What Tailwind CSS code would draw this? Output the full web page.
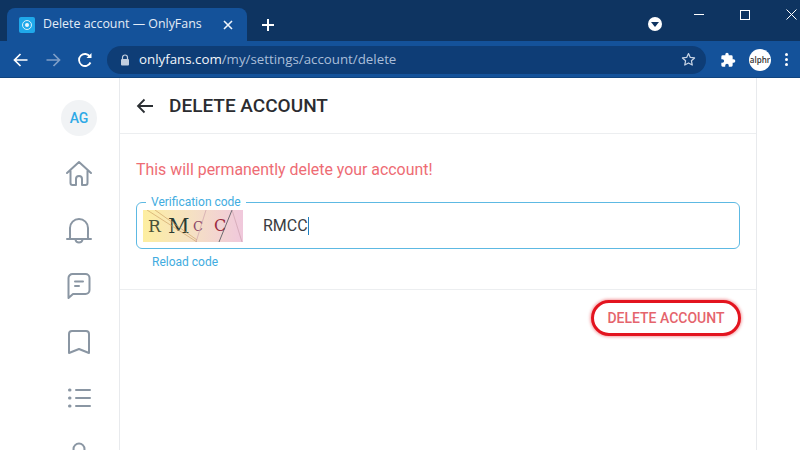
<!DOCTYPE html>
<html lang="en">
  <head>
    <meta charset="UTF-8" />
    <title>Delete account — OnlyFans</title>
    <script src="https://cdn.jsdelivr.net/npm/@tailwindcss/browser@4"></script>
  </head>
  <body class="w-[800px] h-[450px] overflow-hidden bg-white font-['Roboto',sans-serif] flex flex-col">
    <!-- tab strip -->
    <div class="h-[41px] shrink-0 bg-[#0e3461] flex items-end pl-[7px] relative">
      <div class="w-[240px] h-[33px] bg-[#14529a] rounded-t-[8px] flex items-center pl-[12px] pr-[12px] font-['Open_Sans',sans-serif] text-[12.4px] text-[#e4edf7]">
        <div class="w-[16px] h-[16px] rounded-[2px] bg-[#1fa8ea] flex items-center justify-center mr-[8px]">
          <div class="w-[10px] h-[10px] rounded-full border border-white/80 flex items-center justify-center">
            <div class="w-[4px] h-[4px] rounded-full bg-white/90"></div>
          </div>
        </div>
        <span class="flex-1 whitespace-nowrap">Delete account — OnlyFans</span>
        <svg class="w-[10px] h-[10px] mr-[2px]" viewBox="0 0 10 10" stroke="#f0f5fb" stroke-width="1.6"><path d="M1 1l8 8M9 1l-8 8" /></svg>
      </div>
      <svg class="w-[12px] h-[12px] ml-[15px] mb-[10px]" viewBox="0 0 12 12" stroke="#fff" stroke-width="2"><path d="M6 0v12M0 6h12" /></svg>
      <!-- profile dropdown + window controls -->
      <div class="absolute left-[648px] top-[17px] w-[14px] h-[14px] rounded-full bg-white flex items-center justify-center">
        <div class="w-0 h-0 border-l-[4px] border-r-[4px] border-t-[5px] border-l-transparent border-r-transparent border-t-[#0e3461]"></div>
      </div>
      <div class="absolute right-[3px] top-[9px] flex items-center gap-[36px]">
        <div class="w-[10px] h-px bg-white"></div>
        <div class="w-[10px] h-[10px] border border-white"></div>
        <svg class="w-[11px] h-[11px]" viewBox="0 0 11 11" stroke="#fff" stroke-width="1"><path d="M.5.5l10 10M10.500.5l-10 10" /></svg>
      </div>
    </div>
    <!-- toolbar -->
    <div class="h-[37px] shrink-0 bg-[#14529a] flex items-center pl-[13px] pr-[10px] pt-[1px] border-b border-[#10447f]">
      <svg class="w-[15px] h-[14px]" viewBox="0 0 15 14" fill="none" stroke="#fff" stroke-width="1.7"><path d="M14.500 7H1.500M7.500 1L1.500 7l6 6" /></svg>
      <svg class="w-[15px] h-[14px] ml-[18px]" viewBox="0 0 15 14" fill="none" stroke="#7f9fc8" stroke-width="1.7"><path d="M.5 7h13M7.500 1l6 6-6 6" /></svg>
      <svg class="w-[16px] h-[16px] ml-[16px]" viewBox="0 0 16 16" fill="none" stroke="#fff" stroke-width="1.8"><path d="M13.500 10.500A6 6 0 1 1 13 4.600" /><path d="M14.500 1v5h-5z" fill="#fff" stroke="none" /></svg>
      <div class="w-[599px] h-[28px] ml-[14px] rounded-full bg-[#0e3d76] flex items-center pl-[13px] pr-[10px] font-['Open_Sans',sans-serif] text-[13.3px]">
        <svg class="w-[10px] h-[12px]" viewBox="0 0 10 12"><path d="M2.500 5V3.500a2.500 2.500 0 0 1 5 0V5" fill="none" stroke="#c3cfdf" stroke-width="1.2" /><rect x="1" y="5" width="8" height="6.500" rx="1" fill="#c3cfdf" /></svg>
        <span class="ml-[9px] pt-[1px] flex-1 whitespace-nowrap text-[#f2f6fb]">onlyfans.com<span class="text-[#a9bed9]">/my/settings/account/delete</span></span>
        <svg class="w-[15px] h-[15px]" viewBox="0 0 24 24" fill="none" stroke="#c7d4e5" stroke-width="2" stroke-linejoin="round"><path d="M12 2.500l2.900 6.200 6.800.8-5 4.600 1.300 6.700L12 17.500l-6 3.300 1.300-6.700-5-4.600 6.800-.8z" /></svg>
      </div>
      <svg class="w-[16px] h-[16px] ml-[14px]" viewBox="0 0 24 24" fill="#fff"><path d="M20.500 11H19V7a2 2 0 0 0-2-2h-4V3.500a2.500 2.500 0 0 0-5 0V5H4a2 2 0 0 0-2 2v3.800h1.500a2.700 2.700 0 0 1 0 5.400H2V20a2 2 0 0 0 2 2h3.800v-1.500a2.700 2.700 0 0 1 5.400 0V22H17a2 2 0 0 0 2-2v-4h1.500a2.500 2.500 0 0 0 0-5z" /></svg>
      <div class="w-[22px] h-[22px] ml-[13px] rounded-full bg-white flex items-center justify-center font-['Open_Sans',sans-serif] text-[8px] font-semibold text-[#333] overflow-hidden">alphr</div>
      <div class="ml-[14px] flex flex-col gap-[2px]">
        <div class="w-[3px] h-[3px] rounded-full bg-white"></div>
        <div class="w-[3px] h-[3px] rounded-full bg-white"></div>
        <div class="w-[3px] h-[3px] rounded-full bg-white"></div>
      </div>
    </div>
    <!-- page -->
    <div class="flex-1 flex min-h-0 w-[757px] border-r border-[#e8eaed]">
      <!-- sidebar -->
      <div class="w-[120px] shrink-0 border-r border-[#e8eaed] flex flex-col items-center pl-[39px] pt-[22px] overflow-hidden">
        <div class="w-[36px] h-[36px] shrink-0 rounded-full bg-[#f1f3f5] flex items-center justify-center text-[14px] font-medium text-[#2fa9e6]">AG</div>
        <div class="flex flex-col gap-[28px] mt-[24px] text-[#8a96a3]">
          <svg class="w-[28px] h-[28px] shrink-0" viewBox="0 0 28 28" fill="none" stroke="currentColor" stroke-width="2" stroke-linejoin="round" stroke-linecap="round"><path d="M2 13L14 2l12 11M5.500 11v12a2 2 0 0 0 2 2H11v-6a3 3 0 0 1 6 0v6h3.500a2 2 0 0 0 2-2V11" /></svg>
          <svg class="w-[28px] h-[28px] shrink-0" viewBox="0 0 28 28" fill="none" stroke="currentColor" stroke-width="2" stroke-linejoin="round" stroke-linecap="round"><path d="M2 23h24M4.500 23c1-1.500 .5-3 .5-5v-6a9 9 0 0 1 18 0v6c0 2-.5 3.500.5 5M10.500 23.500a3.500 3 0 0 0 7 0" /></svg>
          <svg class="w-[28px] h-[28px] shrink-0" viewBox="0 0 28 28" fill="none" stroke="currentColor" stroke-width="2" stroke-linejoin="round" stroke-linecap="round"><path d="M3.500 26V6a4 4 0 0 1 4-4h13a4 4 0 0 1 4 4v12a4 4 0 0 1-4 4H8z" /><path d="M10 9.500h8M10 14h4" /></svg>
          <svg class="w-[28px] h-[28px] shrink-0" viewBox="0 0 28 28" fill="none" stroke="currentColor" stroke-width="2" stroke-linejoin="round" stroke-linecap="round"><path d="M4 25V6a3 3 0 0 1 3-3h14a3 3 0 0 1 3 3v19l-10-4z" /></svg>
          <svg class="w-[28px] h-[28px] shrink-0" viewBox="0 0 28 28" fill="none" stroke="currentColor" stroke-width="2" stroke-linecap="round"><path d="M11 6h14M11 14h14M11 22h14" /><path d="M4.500 6h.5M4.500 14h.5M4.500 22h.5" stroke-width="3" /></svg>
          <svg class="w-[28px] h-[28px] shrink-0" viewBox="0 0 28 28" fill="none" stroke="currentColor" stroke-width="2"><circle cx="14" cy="9" r="5.500" /><path d="M4 25c1-6 5-8 10-8s9 2 10 8" /></svg>
        </div>
      </div>
      <!-- main column -->
      <div class="flex-1 min-w-0">
        <div class="h-[56px] border-b border-[#eceef0] flex items-center pl-[16px]">
          <svg class="w-[17px] h-[16px]" viewBox="0 0 17 16" fill="none" stroke="#2b2f33" stroke-width="1.800"><path d="M17 8H2M8.500 1.500L2 8l6.500 6.500" /></svg>
          <h1 class="ml-[16px] mt-[2px] text-[19px] font-medium text-[#2b2c30] whitespace-nowrap">DELETE ACCOUNT</h1>
        </div>
        <div class="h-[156px] border-b border-[#eceef0] pt-[25px] px-[16px]">
          <p class="text-[15.9px] leading-[22px] text-[#ee6c74]">This will permanently delete your account!</p>
          <fieldset class="mt-[14px] h-[54px] border border-[#5db9e3] rounded-[6px] pl-[6px] pr-[8px] flex items-center">
            <legend class="ml-[3px] px-[5px] text-[12px] leading-[14px] text-[#41ace0]">Verification code</legend>
            <div class="relative w-[100px] h-[32px] -mt-[6px] shrink-0 overflow-hidden bg-gradient-to-r from-[#fdeea0] via-[#f5e0c4] to-[#f0c8dc] font-['DejaVu_Serif',serif] leading-[32px]">
              <span class="absolute left-[5px] top-[0px] text-[17px] text-[#4b5238]">R</span>
              <span class="absolute left-[25px] top-[0px] text-[21px] text-[#2a3a33]">M</span>
              <span class="absolute left-[50px] top-[1px] text-[13px] text-[#8a4668]">C</span>
              <span class="absolute left-[71px] top-[0px] text-[16px] text-[#9b2c3e]">C</span>
              <svg class="absolute inset-0 w-[100px] h-[32px]" viewBox="0 0 100 32" fill="none" stroke-width="0.600"><path d="M4 0l50 32M12 0l42 30" stroke="#c79a60" /><path d="M89 0L76 32" stroke="#4a5058" stroke-width="0.800" /><path d="M89 0l10 32M63 0L53 32" stroke="#c89aa8" /></svg>
            </div>
            <span class="ml-[20px] -mt-[6px] text-[16px] text-[#3a3d42] whitespace-nowrap">RMCC</span>
            <div class="w-px h-[18px] -mt-[6px] bg-[#1f7fc0]"></div>
          </fieldset>
          <a class="block mt-[5px] ml-[16px] text-[12px] leading-[16px] text-[#41ace0]">Reload code</a>
        </div>
        <div class="flex justify-end pt-[10px] pr-[15px]">
          <button class="w-[150px] h-[36px] rounded-full bg-white border-[3px] border-[#e3141f] shadow-[0_0_3px_1px_rgba(227,20,31,0.4)] text-[14px] font-medium text-[#e5646c] whitespace-nowrap">DELETE ACCOUNT</button>
        </div>
      </div>
    </div>
  </body>
</html>
